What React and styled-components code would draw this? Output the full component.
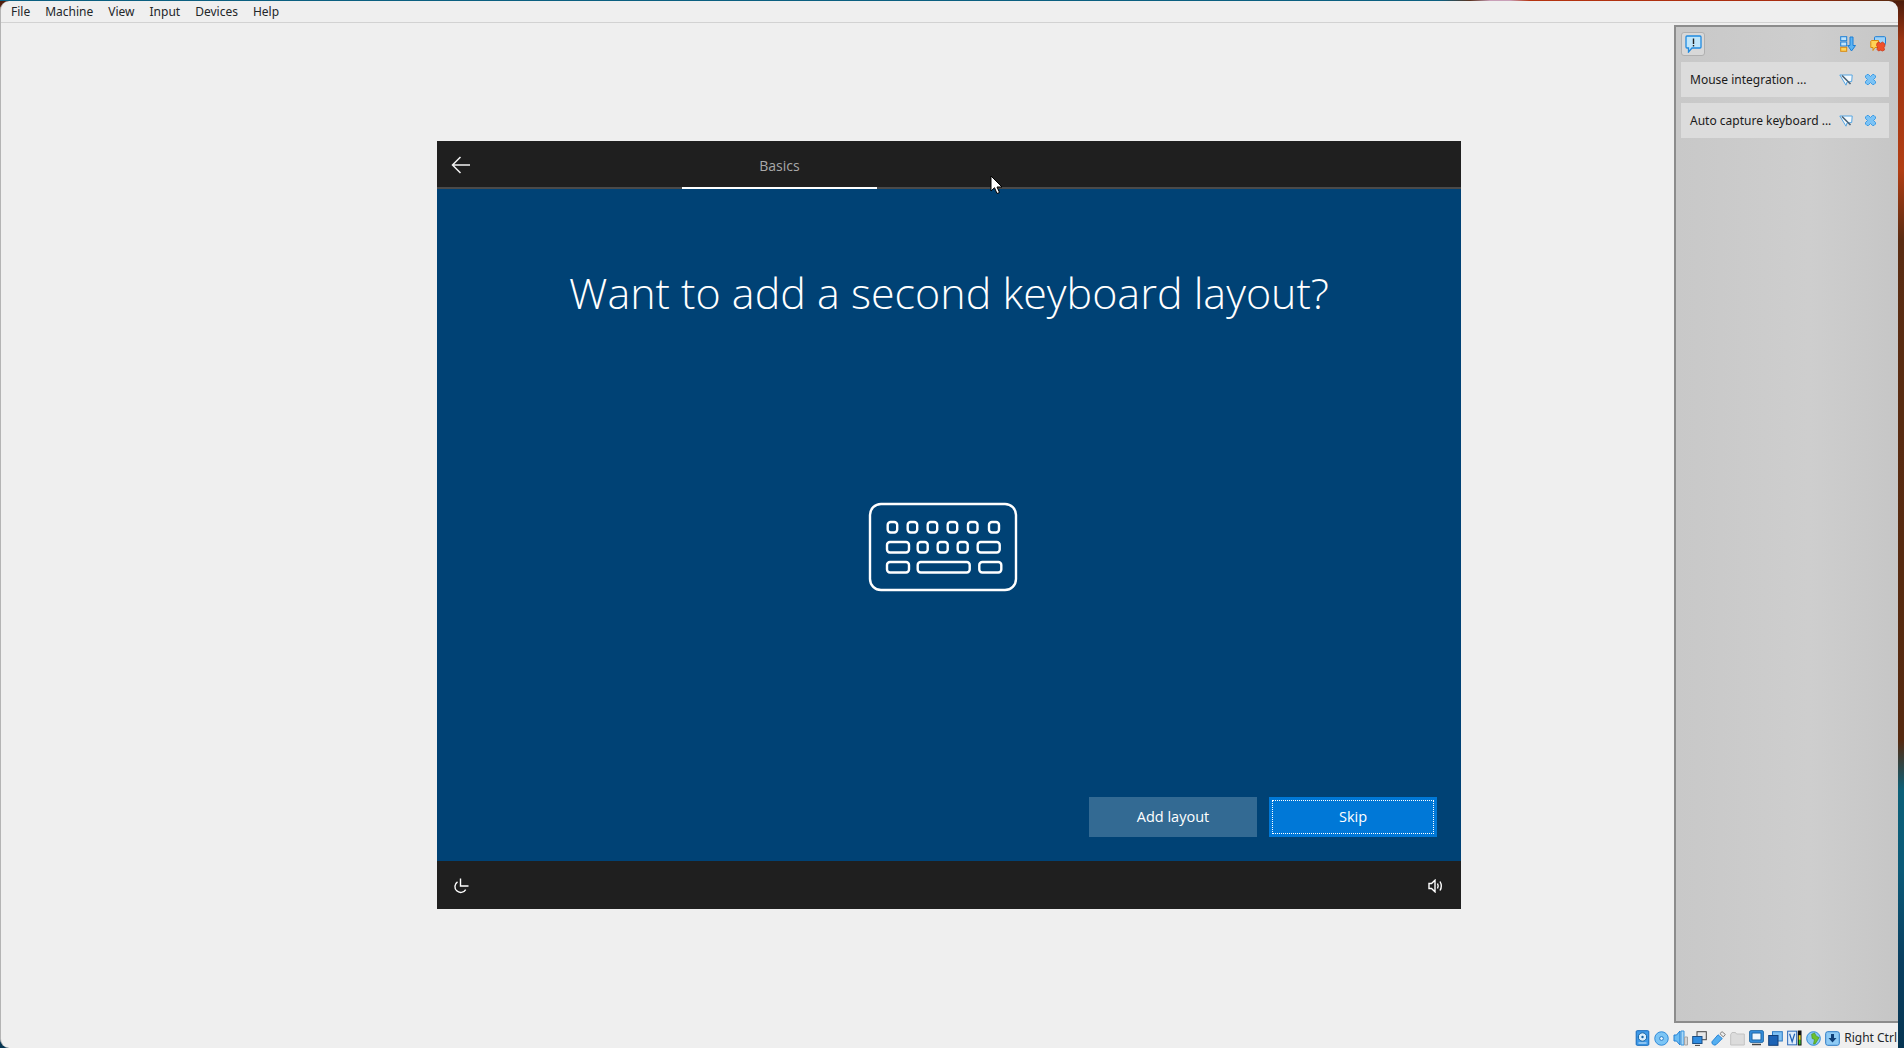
import React from "react";
import styled, { createGlobalStyle } from "styled-components";

const Global = createGlobalStyle`
  html, body { margin: 0; padding: 0; height: 100%; overflow: hidden; }
  #root { height: 100%; }
`;

const Desktop = styled.div`
  height: 100vh;
  box-sizing: border-box;
  padding: 1px 6px 0 0;
  background:
    linear-gradient(90deg, #0b5f80 0 1440px, #5a3320 1470px, #c9a0b8 1490px, #c9a0b8 1510px, #b5330f 1530px, #a92d10 1780px, #5c2a10 1890px) top / 100% 1px no-repeat,
    linear-gradient(180deg, #4a1c0c 0, #9c3412 40px, #b23e14 170px, #5a2c12 240px, #55290f 740px, #0c6078 790px, #0b5a78 870px, #0a3f60 960px, #063552 1048px);
`;

const Window = styled.div`
  position: relative;
  height: 100%;
  display: flex;
  flex-direction: column;
  background: #efefef;
  border-left: 1px solid #b4b4b4;
  border-radius: 9px 9px 0 9px;
  font-family: "Noto Sans", sans-serif;
  color: #232629;
  overflow: hidden;
`;

const MenuBar = styled.nav`
  flex: none;
  height: 21px;
  display: flex;
  align-items: center;
  padding-left: 10px;
  gap: 15px;
  font-size: 12px;
  border-bottom: 1px solid #d2d2d2;
`;

const MenuItem = styled.span`
  line-height: 21px;
`;

const Main = styled.main`
  flex: 1;
  min-height: 0;
  position: relative;
  display: flex;
  justify-content: center;
  align-items: center;
`;

const Guest = styled.section`
  position: relative;
  width: 1024px;
  height: 768px;
  margin-right: 1px;
  margin-bottom: 2px;
  display: flex;
  flex-direction: column;
  background: #004275;
  color: #fff;
  font-family: "Open Sans", sans-serif;
`;

const GuestHeader = styled.header`
  flex: none;
  height: 46px;
  display: flex;
  align-items: center;
  background: #1f1f1f;
  border-bottom: 2px solid #4a4a4a;
  position: relative;
`;

const BackButton = styled.button`
  all: unset;
  display: flex;
  margin: 2px 0 0 14px;
`;

const Tab = styled.div`
  position: absolute;
  left: 245px;
  top: 0;
  bottom: -2px;
  width: 195px;
  padding-top: 3px;
  display: flex;
  align-items: center;
  justify-content: center;
  font-size: 14px;
  color: #a9a9a9;
  border-bottom: 2px solid #fff;
  box-sizing: border-box;
`;

const Page = styled.div`
  flex: 1;
  display: flex;
  flex-direction: column;
  min-height: 0;
`;

const Title = styled.h1`
  margin: 74px 0 0;
  font-size: 43px;
  font-weight: 300;
  line-height: 60px;
  text-align: center;
  color: #fff;
`;

const Illustration = styled.div`
  flex: 1;
  display: flex;
  justify-content: center;
  padding-top: 179px;
  padding-right: 13px;
`;

const Actions = styled.div`
  display: flex;
  justify-content: flex-end;
  gap: 12px;
  padding: 0 24px 24px 0;
`;

const Action = styled.button`
  width: 168px;
  height: 40px;
  border: 0;
  padding: 0 0 0 0;
  color: #fff;
  font: 400 14.5px "Open Sans", sans-serif;
  background: ${(p) => (p.$primary ? "#0078d7" : "#336a93")};
  ${(p) => p.$primary && "outline: 1px dotted #fff; outline-offset: -4px;"}
`;

const GuestFooter = styled.footer`
  flex: none;
  height: 48px;
  box-sizing: border-box;
  display: flex;
  align-items: center;
  justify-content: space-between;
  padding: 2px 17px 0 16px;
  background: #1f1f1f;
`;

const Cursor = styled.svg`
  position: absolute;
  left: 553px;
  top: 34px;
`;

const MiniPanel = styled.aside`
  position: absolute;
  top: 2px;
  right: 0;
  bottom: 5px;
  width: 224px;
  box-sizing: border-box;
  border: 2px solid #8c8c8c;
  border-right: 0;
  background: linear-gradient(90deg, #c8c8c8, #cecece 60%, #c6c6c6);
  padding: 5px 9px 0 5px;
  display: flex;
  flex-direction: column;
  gap: 6px;
  font-size: 12px;
  color: #1a1a1a;
`;

const PanelTools = styled.div`
  display: flex;
  align-items: center;
  height: 23px;
  margin-bottom: 1px;
  padding-right: 3px;
`;

const ToolButton = styled.div`
  width: 22px;
  height: 22px;
  display: flex;
  align-items: center;
  justify-content: center;
  border: 1px solid #b0b0b0;
  border-radius: 3px;
  background: #d8d8d8;
  margin-right: auto;
`;

const ToolIcon = styled.span`
  display: flex;
  margin-left: 14px;
`;

const Notice = styled.div`
  height: 35px;
  display: flex;
  align-items: center;
  padding: 0 13px 0 9px;
  background: #dcdcdc;
  white-space: nowrap;
`;

const NoticeText = styled.span`
  flex: 1;
  padding-bottom: 1px;
`;

const NoticeIcon = styled.span`
  display: flex;
  margin-left: ${(p) => p.$gap || 0}px;
`;

const StatusBar = styled.footer`
  flex: none;
  height: 20px;
  display: flex;
  align-items: center;
  justify-content: flex-end;
  gap: 4px;
  padding-right: 1px;
  font-size: 12px;
  white-space: nowrap;
`;

const StatusIcon = styled.svg`
  flex: none;
  display: block;
`;

const StatusText = styled.span`
  line-height: 20px;
`;

const menus = ["File", "Machine", "View", "Input", "Devices", "Help"];

const keys = [
  [19.7, 20, 9.5], [39.7, 20, 9.5], [59.7, 20, 9.5], [79.7, 20, 9.5], [100, 20, 9.5], [121, 20, 10],
  [19, 40, 22], [49.7, 40, 10], [69.7, 40, 10], [89.7, 40, 10], [109.7, 40, 22],
  [19, 60, 22], [49.7, 60, 52], [111.3, 60, 22],
];

const KeyboardArt = () => (
  <svg width="150" height="90" viewBox="0 0 150 90" fill="none" stroke="#fff" strokeWidth="2.4">
    <rect x="2" y="2" width="146" height="86" rx="11" />
    {keys.map(([x, y, w]) => (
      <rect key={`${x}-${y}`} x={x} y={y} width={w} height="10.5" rx="3" />
    ))}
  </svg>
);

const BackArrow = () => (
  <svg width="19" height="18" viewBox="0 0 19 18" fill="none" stroke="#f2f2f2" strokeWidth="1.5">
    <path d="M19 9H1.5M9.5 1 1.5 9l8 8" />
  </svg>
);

const EaseIcon = () => (
  <svg width="16" height="16" viewBox="0 0 16 16" fill="none" stroke="#fff" strokeWidth="1.4">
    <path d="M4.5 3.800a5.800 5.800 0 1 0 8.200 7.800" />
    <path d="M7.500 .5v7.500H15.500" />
  </svg>
);

const SpeakerIcon = () => (
  <svg width="16" height="14" viewBox="0 0 16 14" fill="none" stroke="#fff" strokeWidth="1.4">
    <path d="M1 4.500h2.500L7 1.200v11.600L3.500 9.500H1z" />
    <path d="M9.500 4.500q1.400 2.500 0 5M12 2.500q2.600 4.500 0 9" />
  </svg>
);

const SpeechAlert = () => (
  <svg width="17" height="18" viewBox="0 0 17 18">
    <path d="M2 1h13a1 1 0 0 1 1 1v10a1 1 0 0 1-1 1H7l-3.500 4v-4H2a1 1 0 0 1-1-1V2a1 1 0 0 1 1-1z" fill="#bfe6fb" stroke="#1f8ae0" strokeWidth="1.3" />
    <path d="M7.800 3.500h1.400v5.500H7.800zM7.800 10h1.400v1.500H7.800z" fill="#222" />
  </svg>
);

const SortDown = () => (
  <svg width="16" height="16" viewBox="0 0 16 16">
    <rect x=".7" y=".7" width="6" height="4" fill="#bfe3fa" stroke="#1c7fd6" />
    <rect x=".7" y="6" width="6" height="4" fill="#bfe3fa" stroke="#1c7fd6" />
    <rect x=".7" y="11.300" width="6" height="4" fill="#ffd257" stroke="#d98a10" />
    <path d="M10 1h3v8.500h2.500L11.500 15 7.700 9.500H10z" fill="#5cb4f2" stroke="#1c7fd6" />
  </svg>
);

const CloseAll = () => (
  <svg width="16" height="16" viewBox="0 0 16 16">
    <rect x="4.500" y=".7" width="11" height="8" rx="1" fill="#9fd2f7" stroke="#1c7fd6" />
    <path d="M1.500 4.500h7v7H5l-2 3v-3H.8v-6.300z" fill="#ffd257" stroke="#d98a10" />
    <path d="M7 7l2-1 1.500 1.200L12.500 6l2 1.500.5 2.500-1 1.500.5 2.500-2 1-2-.8-2 .8-1.500-1.500.5-2.500L6.500 9.500z" fill="#f0502a" stroke="#c93412" strokeWidth=".7" />
  </svg>
);

const MouseOff = () => (
  <svg width="14" height="12" viewBox="0 0 14 12">
    <path d="M.8 1h12.400l-.5 6.500L8 8l-1 3.200L4.500 7z" fill="#f4f9fd" stroke="#55a5e2" />
    <path d="M3 1.500l8.500 8.500" stroke="#4a6175" strokeWidth="1.600" />
  </svg>
);

const PuzzleClose = () => (
  <svg width="11" height="11" viewBox="0 0 11 11">
    <path d="M.5 2 2 .5h1.500L5.500 2.500 7.500.5H9L10.500 2v1.500L8.500 5.500l2 2V9L9 10.500H7.500l-2-2-2 2H2L.5 9V7.500l2-2-2-2z" fill="#7cc3f5" stroke="#3d9be4" />
  </svg>
);

const Hdd = () => (
  <StatusIcon width="15" height="16" viewBox="0 0 14 16">
    <rect x=".7" y=".7" width="12.600" height="14.600" rx="1" fill="#3f9ae8" stroke="#1268bb" />
    <circle cx="7" cy="7" r="4.200" fill="#d9edfb" stroke="#14609f" />
    <circle cx="7" cy="7" r="1.200" fill="#14609f" />
    <path d="M3 13h8" stroke="#d9edfb" />
  </StatusIcon>
);

const Cd = () => (
  <StatusIcon width="15" height="15" viewBox="0 0 16 16">
    <circle cx="8" cy="8" r="7.200" fill="#7cc5f5" stroke="#2a86d8" />
    <circle cx="8" cy="8" r="2" fill="#eaf6fe" stroke="#1f75c4" />
  </StatusIcon>
);

const Audio = () => (
  <StatusIcon width="15" height="16" viewBox="0 0 15 16">
    <path d="M1 5h2.500L7 1v14l-3.500-4H1z" fill="#6bbcf3" stroke="#1f7fd4" />
    <path d="M8 1h3v14H8z" fill="#a9d8f8" stroke="#3a95dd" />
    <path d="M11.500 7h3v8h-3z" fill="#d4d4d4" stroke="#a5a5a5" />
  </StatusIcon>
);

const Network = () => (
  <StatusIcon width="15" height="15" viewBox="0 0 15 15">
    <rect x="5" y=".7" width="9.300" height="8" fill="#e8e8e8" stroke="#444" />
    <rect x=".7" y="5.500" width="9.300" height="7" fill="#2f8ce0" stroke="#1b4f86" />
    <path d="M3 14.400h5" stroke="#444" />
  </StatusIcon>
);

const Usb = () => (
  <StatusIcon width="15" height="15" viewBox="0 0 16 16">
    <path d="M1 11.500 7.500 4l4.500 4-6.500 6.500a2.500 2.500 0 0 1-3 0 2.500 2.500 0 0 1-1.500-3z" fill="#55aff0" stroke="#1f7fd4" />
    <path d="M9.500 2.800 11.800.7l3.500 3-2.200 2.600z" fill="#eee" stroke="#777" />
  </StatusIcon>
);

const Folder = () => (
  <StatusIcon width="15" height="15" viewBox="0 0 15 15">
    <path d="M.7 3.500 2 1.500h3.500l1 1.500h7.800v11H.7z" fill="#dcdcdc" stroke="#c2c2c2" />
  </StatusIcon>
);

const Display = () => (
  <StatusIcon width="15" height="16" viewBox="0 0 15 16">
    <rect x=".7" y=".7" width="13.600" height="11.600" rx="1" fill="#3a95e6" stroke="#14609f" />
    <rect x="3" y="3" width="9" height="7" fill="#eef7fd" stroke="#14609f" />
    <path d="M3 14.500h9" stroke="#444" strokeWidth="1.500" />
  </StatusIcon>
);

const Capture = () => (
  <StatusIcon width="15" height="15" viewBox="0 0 15 15">
    <rect x="4.500" y=".7" width="9.800" height="9.300" fill="#7fc0f3" stroke="#2a79c4" />
    <rect x=".7" y="4.500" width="9.300" height="9.800" fill="#1d63b5" stroke="#123f78" />
  </StatusIcon>
);

const VtBadge = () => (
  <StatusIcon width="15" height="16" viewBox="0 0 16 16">
    <rect x=".7" y=".7" width="9.600" height="14.600" fill="#dcebfa" stroke="#1f5fb4" />
    <path d="M2.800 3.500 5.500 12l2.700-8.500" fill="none" stroke="#1f5fb4" strokeWidth="1.300" />
    <rect x="11.500" width="4" height="16" fill="#111" />
    <rect x="12.500" y="5" width="2" height="5" fill="#f0d820" />
    <rect x="12.500" y="10" width="2" height="5" fill="#3ec02a" />
  </StatusIcon>
);

const Globe = () => (
  <StatusIcon width="15" height="15" viewBox="0 0 16 16">
    <circle cx="8" cy="8" r="7.300" fill="#8cc9f3" stroke="#2a86d8" />
    <path d="M6 3.500 9 2l2 3.500 3 1.500-4 6.500-2 .5 1-5L6.500 8z" fill="#6cc02e" stroke="#3d8a14" strokeWidth=".6" />
  </StatusIcon>
);

const Additions = () => (
  <StatusIcon width="15" height="15" viewBox="0 0 15 15">
    <rect x=".7" y=".7" width="13.600" height="13.600" rx="2" fill="#8fcbf5" stroke="#2a79c4" />
    <path d="M6 3h3v4h2.500l-4 4.500-4-4.500H6z" fill="#0f3f78" />
  </StatusIcon>
);

export default function App() {
  return (
    <Desktop>
      <Global />
      <Window>
        <MenuBar>
          {menus.map((m) => (
            <MenuItem key={m}>{m}</MenuItem>
          ))}
        </MenuBar>
        <Main>
          <Guest>
            <GuestHeader>
              <BackButton>
                <BackArrow />
              </BackButton>
              <Tab>Basics</Tab>
            </GuestHeader>
            <Page>
              <Title>Want to add a second keyboard layout?</Title>
              <Illustration>
                <KeyboardArt />
              </Illustration>
              <Actions>
                <Action>Add layout</Action>
                <Action $primary>Skip</Action>
              </Actions>
            </Page>
            <GuestFooter>
              <EaseIcon />
              <SpeakerIcon />
            </GuestFooter>
            <Cursor width="13" height="20" viewBox="0 0 13 20">
              <path d="M1 1v15l3.500-3.300L7 18.500l2.500-1L7 12h5z" fill="#fff" stroke="#000" />
            </Cursor>
          </Guest>
          <MiniPanel>
            <PanelTools>
              <ToolButton>
                <SpeechAlert />
              </ToolButton>
              <ToolIcon>
                <SortDown />
              </ToolIcon>
              <ToolIcon>
                <CloseAll />
              </ToolIcon>
            </PanelTools>
            <Notice>
              <NoticeText>Mouse integration ...</NoticeText>
              <NoticeIcon>
                <MouseOff />
              </NoticeIcon>
              <NoticeIcon $gap={12}>
                <PuzzleClose />
              </NoticeIcon>
            </Notice>
            <Notice>
              <NoticeText>Auto capture keyboard ...</NoticeText>
              <NoticeIcon>
                <MouseOff />
              </NoticeIcon>
              <NoticeIcon $gap={12}>
                <PuzzleClose />
              </NoticeIcon>
            </Notice>
          </MiniPanel>
        </Main>
        <StatusBar>
          <Hdd />
          <Cd />
          <Audio />
          <Network />
          <Usb />
          <Folder />
          <Display />
          <Capture />
          <VtBadge />
          <Globe />
          <Additions />
          <StatusText>Right Ctrl</StatusText>
        </StatusBar>
      </Window>
    </Desktop>
  );
}
